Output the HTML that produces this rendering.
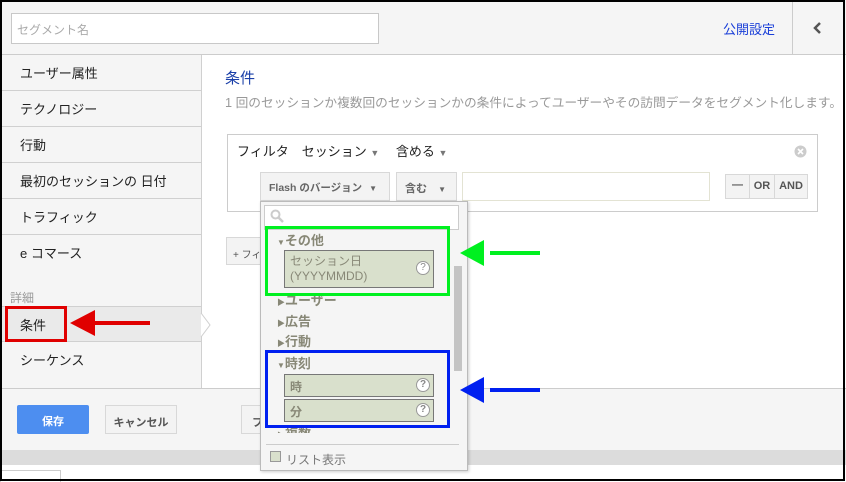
<!DOCTYPE html>
<html><head><meta charset="utf-8"><style>
*{box-sizing:border-box;margin:0;padding:0}
body{width:846px;height:481px;overflow:hidden;background:#fff;font-family:"Liberation Sans","Noto Sans CJK JP",sans-serif;font-size:13px;color:#222;position:relative}
.a{position:absolute;white-space:nowrap}
.nav div.i{position:absolute;left:0;width:201px;height:36px;border-bottom:1px solid #d0d0d0;padding:8px 0 0 20px;font-size:13px}
.btn{position:absolute;border:1px solid #d8d8d8;background:#f3f3f3;font-weight:bold;font-size:11px;color:#555;white-space:nowrap;overflow:hidden}
.it{position:absolute;font-weight:bold;color:#887;font-size:13px;white-space:nowrap}
.box{position:absolute;background:#d9e0cc;border:1px solid #777;color:#887;font-size:12px;font-weight:bold}
.q{position:absolute;right:3px;top:3px;width:14px;height:14px;border:1.5px solid #999;border-radius:50%;background:#fff;font-size:10px;text-align:center;line-height:11px;color:#888}
</style></head><body>
<div class="a" style="left:0;top:0;width:846px;height:55px;background:#f5f5f5;border-bottom:1px solid #ccc"></div>
<div class="a" style="left:11px;top:13px;width:368px;height:31px;background:#fff;border:1px solid #c8c8c8;color:#aaa;padding:7px 5px;font-size:12px">セグメント名</div>
<div class="a" style="left:723px;top:19px;color:#1a3fd8;font-size:13px">公開設定</div>
<div class="a" style="left:792px;top:2px;width:1px;height:52px;background:#ccc"></div>
<svg class="a" style="left:812px;top:20px" width="12" height="16"><path d="M8 3 L3 8 L8 13" stroke="#555" stroke-width="2.5" fill="none"/></svg>
<div class="a nav" style="left:0;top:55px;width:202px;height:333px;background:#f5f5f5;border-right:1px solid #d0d0d0">
<div class="i" style="top:0">ユーザー属性</div>
<div class="i" style="top:36px">テクノロジー</div>
<div class="i" style="top:72px">行動</div>
<div class="i" style="top:108px">最初のセッションの 日付</div>
<div class="i" style="top:144px">トラフィック</div>
<div class="i" style="top:180px;border:none">e コマース</div>
<div class="a" style="left:10px;top:234px;color:#999;font-size:12px">詳細</div>
<div class="i" style="top:251px;background:#eaeaea;border-top:1px solid #d0d0d0">条件</div>
<div class="i" style="top:287px;border:none">シーケンス</div>
</div>
<svg class="a" style="left:200px;top:313px" width="12" height="24"><path d="M1 0 L10 12 L1 24" fill="#fff" stroke="#d0d0d0"/></svg>
<div class="a" style="left:225px;top:67px;color:#1a3fa8;font-size:15px">条件</div>
<div class="a" style="left:225px;top:92px;color:#999;font-size:12.7px">1 回のセッションか複数回のセッションかの条件によってユーザーやその訪問データをセグメント化します。</div>
<div class="a" style="left:227px;top:134px;width:591px;height:78px;border:1px solid #ccc;background:#fff"></div>
<div class="a" style="left:237px;top:141px;font-size:13px">フィルタ　セッション <span style="color:#777;font-size:9px">▼</span>　 含める <span style="color:#777;font-size:9px">▼</span></div>
<svg class="a" style="left:794px;top:145px" width="13" height="13"><circle cx="6.5" cy="6.5" r="6" fill="#ccc"/><path d="M4 4L9 9M9 4L4 9" stroke="#fff" stroke-width="1.6"/></svg>
<div class="btn" style="left:260px;top:172px;width:130px;height:29px;padding:7px 8px;color:#666;font-size:10.5px">Flash のバージョン <span style="font-size:8px;margin-left:4px">▼</span></div>
<div class="btn" style="left:396px;top:172px;width:61px;height:29px;padding:7px 8px;color:#666">含む <span style="font-size:8px;margin-left:8px">▼</span></div>
<div class="a" style="left:462px;top:172px;width:248px;height:29px;border:1px solid #e3e3d3;background:#fff"></div>
<div class="btn" style="left:725px;top:174px;width:25px;height:25px;text-align:center;padding-top:4px">—</div>
<div class="btn" style="left:749px;top:174px;width:26px;height:25px;text-align:center;padding-top:5px">OR</div>
<div class="btn" style="left:774px;top:174px;width:34px;height:25px;text-align:center;padding-top:5px">AND</div>
<div class="btn" style="left:226px;top:237px;width:40px;height:28px;padding:8px 6px;font-weight:normal;font-size:10px">+ フィ</div>
<div class="a" style="left:0;top:388px;width:846px;height:62px;background:#f5f5f5;border-top:1px solid #ccc"></div>
<div class="a" style="left:17px;top:405px;width:72px;height:29px;background:#4d8ef0;border-radius:2px;color:#fff;font-weight:bold;font-size:11px;text-align:center;padding-top:8px">保存</div>
<div class="btn" style="left:105px;top:405px;width:72px;height:29px;text-align:center;padding-top:8px">キャンセル</div>
<div class="btn" style="left:241px;top:405px;width:30px;height:29px;padding:8px 10px">フ</div>
<div class="a" style="left:0;top:450px;width:846px;height:15px;background:#dcdcdc"></div>
<div class="a" style="left:0;top:470px;width:61px;height:12px;border:1px solid #ccc;border-bottom:none"></div>
<div class="a" style="left:260px;top:201px;width:208px;height:270px;background:#f5f5f5;border:1px solid #bbb;box-shadow:1px 1px 3px rgba(0,0,0,.2)"></div>
<div class="a" style="left:264px;top:205px;width:195px;height:25px;background:#fff;border:1px solid #ccc"></div>
<svg class="a" style="left:270px;top:209px" width="14" height="14"><circle cx="5.5" cy="5.5" r="4" stroke="#ccc" stroke-width="2" fill="none"/><path d="M8.5 8.5L13 13" stroke="#ccc" stroke-width="2.5"/></svg>
<div class="a" style="left:454px;top:266px;width:8px;height:105px;background:#c4c4c4"></div>
<div class="it" style="left:277px;top:230px"><span style="font-size:8px">▼</span>その他</div>
<div class="box" style="left:284px;top:250px;width:150px;height:38px;padding:3px 5px;line-height:15px;font-weight:normal">セッション日<br>(YYYYMMDD)<span class="q" style="top:10px">?</span></div>
<div class="it" style="left:277px;top:290px"><span style="font-size:8px">▶</span>ユーザー</div>
<div class="it" style="left:277px;top:311px"><span style="font-size:8px">▶</span>広告</div>
<div class="it" style="left:277px;top:331px"><span style="font-size:8px">▶</span>行動</div>
<div class="it" style="left:277px;top:353px"><span style="font-size:8px">▼</span>時刻</div>
<div class="box" style="left:284px;top:374px;width:150px;height:23px;padding:3px 5px">時<span class="q">?</span></div>
<div class="box" style="left:284px;top:399px;width:150px;height:23px;padding:3px 5px">分<span class="q">?</span></div>
<div class="it" style="left:277px;top:423px;height:10px;overflow:hidden"><span style="font-size:8px">▶</span>複数</div>
<div class="a" style="left:266px;top:444px;width:193px;height:1px;background:#ccc"></div>
<div class="a" style="left:270px;top:451px;width:11px;height:11px;border:1px solid #999;background:#d9e0cc"></div>
<div class="a" style="left:286px;top:451px;color:#777;font-size:12px">リスト表示</div>
<div class="a" style="left:265px;top:226px;width:185px;height:70px;border:3px solid #00f020"></div>
<div class="a" style="left:265px;top:350px;width:185px;height:78px;border:3px solid #0020f0"></div>
<div class="a" style="left:5px;top:306px;width:62px;height:36px;border:3px solid #e00000"></div>
<svg class="a" style="left:0;top:0" width="846" height="481">
<path d="M490 253 L540 253" stroke="#00f020" stroke-width="4"/><path d="M460 253 L484 240 L484 266Z" fill="#00f020"/>
<path d="M490 390 L540 390" stroke="#0020f0" stroke-width="4"/><path d="M460 390 L484 377 L484 403Z" fill="#0020f0"/>
<path d="M95 323 L150 323" stroke="#e00000" stroke-width="4"/><path d="M70 323 L95 310 L95 336Z" fill="#e00000"/>
<rect x="1" y="1" width="843" height="479" fill="none" stroke="#000" stroke-width="2"/>
</svg>
</body></html>
